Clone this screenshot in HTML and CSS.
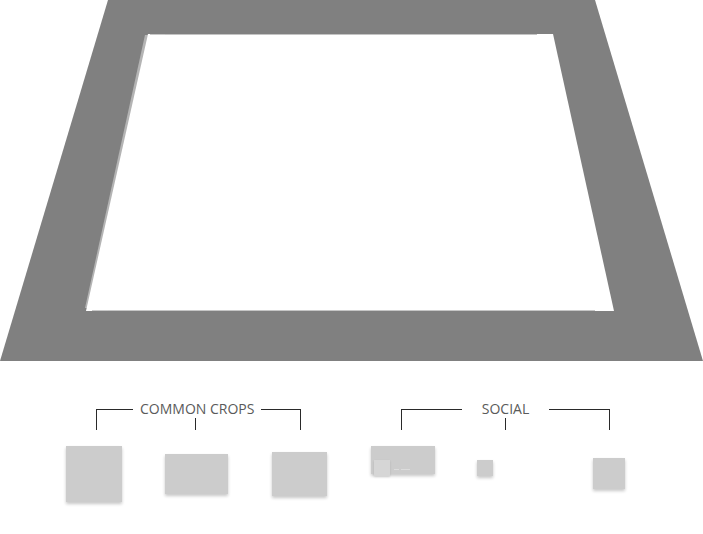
FILE: index.html
```html
<!DOCTYPE html>
<html lang="en">
<head>
    <meta charset="UTF-8">
    <meta name="viewport" content="width=device-width, initial-scale=1.0">
    <title>Crop Presets</title>
    <link rel="stylesheet" href="styles.css">
</head>
<body>
    <div class="stage">
        <svg class="frame" width="703" height="361" viewBox="0 0 703 361">
            <polygon points="108,0 595,0 703,361 0,361" fill="#808080"/>
            <polygon points="145,35 150,35 90,308 85,308" fill="#b4b4b4"/>
            <polygon points="148,34 553,34 614,311 86,311" fill="#ffffff"/>
            <line x1="150" y1="34.5" x2="165" y2="34.5" stroke="#c8c8c8" stroke-width="1"/>
            <line x1="165" y1="34.5" x2="537" y2="34.5" stroke="#9a9a9a" stroke-width="0.6"/>
            <line x1="92" y1="310.5" x2="108" y2="310.5" stroke="#c8c8c8" stroke-width="1"/>
            <line x1="108" y1="310.5" x2="595" y2="310.5" stroke="#a0a0a0" stroke-width="0.6"/>
        </svg>
    </div>

    <div class="presets">
        <div class="group group-common">
            <div class="bracket">
                <div class="bracket-line bracket-line-left"></div>
                <div class="bracket-mid">
                    <span class="bracket-label">COMMON CROPS</span>
                    <span class="bracket-tick"></span>
                </div>
                <div class="bracket-line bracket-line-right"></div>
            </div>
            <div class="thumbs">
                <div class="thumb thumb-square"></div>
                <div class="thumb thumb-landscape"></div>
                <div class="thumb thumb-photo"></div>
            </div>
        </div>

        <div class="group group-social">
            <div class="bracket">
                <div class="bracket-line bracket-line-left"></div>
                <div class="bracket-mid">
                    <span class="bracket-label">SOCIAL</span>
                    <span class="bracket-tick"></span>
                </div>
                <div class="bracket-line bracket-line-right"></div>
            </div>
            <div class="thumbs">
                <div class="thumb thumb-cover">
                    <span class="cover-avatar"></span>
                    <span class="cover-dash cover-dash-short"></span>
                    <span class="cover-dash cover-dash-long"></span>
                </div>
                <div class="thumb thumb-icon"></div>
                <div class="thumb thumb-profile"></div>
            </div>
        </div>
    </div>
</body>
</html>
```

FILE: styles.css
```css
body {
    margin: 0;
    padding: 0;
    font-family: 'Open Sans', sans-serif;
    background: #ffffff;
    color: #555555;
    width: 703px;
    height: 534px;
    overflow: hidden;
}

.stage {
    height: 361px;
}

.frame {
    display: block;
}

.presets {
    display: flex;
    padding: 39px 0 0 66px;
    gap: 44px;
}

.group {
    display: flex;
    flex-direction: column;
}

.group-common {
    width: 261px;
}

.group-social {
    width: 254px;
}

.bracket {
    display: flex;
    align-items: flex-start;
    margin-left: 30px;
}

.group-common .bracket {
    width: 205px;
}

.group-social .bracket {
    width: 209px;
}

.bracket-line {
    flex: 1;
    height: 20px;
    margin-top: 9px;
    border-top: 1px solid #2a2a2a;
}

.bracket-line-left {
    border-left: 1px solid #2a2a2a;
}

.bracket-line-right {
    border-right: 1px solid #2a2a2a;
}

.group-common .bracket-line-left {
    flex: none;
    width: 36px;
}

.bracket-mid {
    display: flex;
    flex-direction: column;
    align-items: center;
}

.group-common .bracket-mid {
    padding: 0 7px;
}

.group-social .bracket-mid {
    padding: 0 20px;
}

.bracket-label {
    font-size: 14px;
    line-height: 18px;
    white-space: nowrap;
    color: #5a5a5a;
}

.bracket-tick {
    width: 1px;
    height: 12px;
    background: #2a2a2a;
}

.group-common .bracket-tick {
    margin-right: 4px;
}

.thumbs {
    display: flex;
    align-items: flex-start;
    margin-top: 16px;
}

.thumb {
    background: #cccccc;
    box-shadow: 0 2px 3px rgba(0, 0, 0, 0.22);
}

.thumb-square {
    width: 56px;
    height: 56px;
}

.thumb-landscape {
    width: 63px;
    height: 40px;
    margin: 8px 0 0 43px;
}

.thumb-photo {
    width: 55px;
    height: 44px;
    margin: 6px 0 0 44px;
}

.thumb-cover {
    width: 64px;
    height: 28px;
    display: flex;
    align-items: flex-end;
    padding-left: 3px;
    box-sizing: border-box;
}

.cover-avatar {
    width: 16px;
    height: 16px;
    margin-bottom: -2px;
    background: #d6d6d6;
    box-shadow: 0 1px 2px rgba(0, 0, 0, 0.12);
}

.cover-dash {
    height: 1.5px;
    margin-bottom: 4px;
    background: #dcdcdc;
}

.cover-dash-short {
    width: 5px;
    margin-left: 4px;
}

.cover-dash-long {
    width: 9px;
    margin-left: 2px;
}

.thumb-icon {
    width: 16px;
    height: 16px;
    margin: 14px 0 0 42px;
}

.thumb-profile {
    width: 32px;
    height: 31px;
    margin: 12px 0 0 100px;
}
```
